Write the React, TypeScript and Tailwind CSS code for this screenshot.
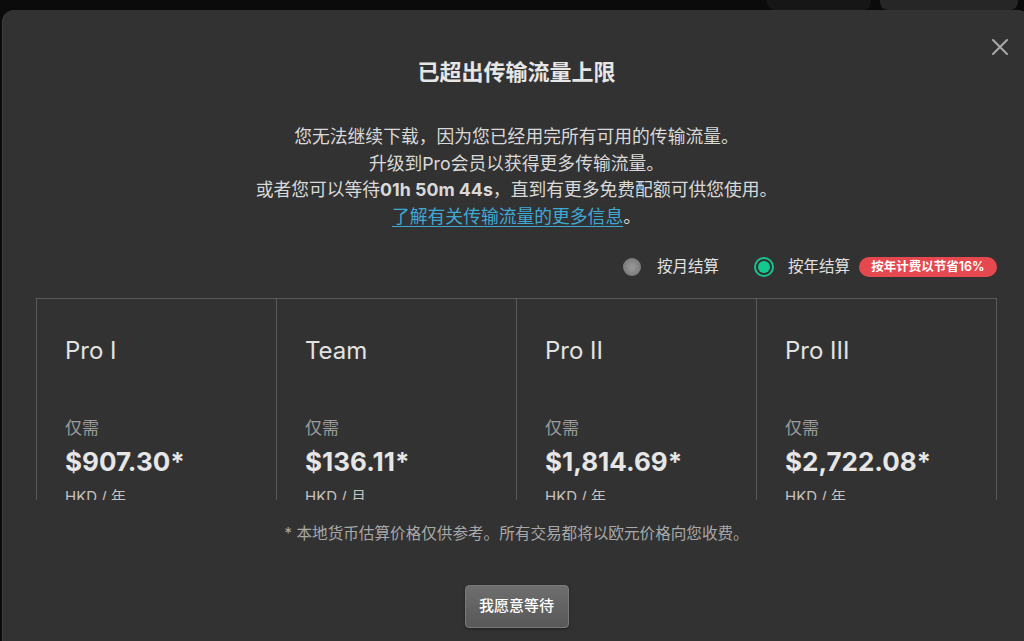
import React from "react";

const plans = [
  { name: "Pro I", price: "$907.30*", unit: "HKD / 年" },
  { name: "Team", price: "$136.11*", unit: "HKD / 月" },
  { name: "Pro II", price: "$1,814.69*", unit: "HKD / 年" },
  { name: "Pro III", price: "$2,722.08*", unit: "HKD / 年" },
];

export default function App() {
  return (
    <div
      className="relative w-[1024px] h-[641px] overflow-hidden bg-[#0b0b0b] pt-[10px] pl-[2px]"
      style={{ fontFamily: 'Inter, "Noto Sans CJK SC", sans-serif' }}
    >
      {/* background app elements peeking above modal */}
      <div className="absolute left-[767px] top-[-20px] w-[104px] h-[30px] rounded-[8px] bg-[#161616]" />
      <div className="absolute left-[880px] top-[-20px] w-[138px] h-[30px] rounded-[8px] bg-[#262626]" />

      <div className="relative w-[1028px] h-[640px] rounded-t-[12px] bg-[#323232] border-l border-[#3c3c3c] px-[33px] pt-[47px] flex flex-col items-center">
        {/* close */}
        <button className="absolute right-[21px] top-[28px] w-[18px] h-[18px] flex items-center justify-center">
          <svg width="18" height="18" viewBox="0 0 18 18" fill="none">
            <path d="M2 2L16 16M16 2L2 16" stroke="#a8a8a8" strokeWidth="2" strokeLinecap="round" />
          </svg>
        </button>

        <h1 className="text-[22px] leading-[30px] font-bold text-[#e6e6e6]">已超出传输流量上限</h1>

        <div className="mt-[37px] text-center text-[17.8px] leading-[26.5px] text-[#d9d9d9]">
          <p>您无法继续下载，因为您已经用完所有可用的传输流量。</p>
          <p>升级到Pro会员以获得更多传输流量。</p>
          <p>
            或者您可以等待<span className="font-bold">01h 50m 44s</span>，直到有更多免费配额可供您使用。
          </p>
          <p>
            <span className="text-[#3fa9d6] underline underline-offset-[3px]">了解有关传输流量的更多信息</span>。
          </p>
        </div>

        <div className="mt-[25px] w-full h-[24px] flex items-center justify-end text-[15.5px] text-[#e0e0e0]">
          <div className="flex items-center">
            <span className="w-[18px] h-[18px] rounded-full bg-[radial-gradient(circle,#9a9a9a_0%,#7c7c7c_70%,#6a6a6a_100%)]" />
            <span className="ml-[16px] leading-[24px]">按月结算</span>
          </div>
          <div className="flex items-center ml-[35px]">
            <span className="w-[20px] h-[20px] rounded-full border-2 border-[#17c48f] flex items-center justify-center">
              <span className="w-[12px] h-[12px] rounded-full bg-[#14c98f]" />
            </span>
            <span className="ml-[14px] leading-[24px]">按年结算</span>
          </div>
          <span className="ml-[9px] w-[138px] h-[20px] rounded-full bg-[#e5484f] text-white text-[12.5px] font-semibold leading-[20px] text-center">
            按年计费以节省16%
          </span>
        </div>

        <div className="mt-[19px] w-full h-[202px] overflow-hidden">
          <div className="grid grid-cols-4 border-t border-l border-[#5a5a5a]">
            {plans.map((p) => (
              <div key={p.name} className="border-r border-[#5a5a5a] h-[260px] pl-[28px] pt-[36px]">
                <div className="text-[24px] leading-[32px] text-[#e2e2e2]">{p.name}</div>
                <div className="mt-[49px] text-[17px] leading-[24px] text-[#9c9c9c]">仅需</div>
                <div className="mt-[6px] text-[26px] leading-[32px] font-bold text-[#e6e6e6]">{p.price}</div>
                <div className="mt-[9px] text-[15px] leading-[20px] text-[#c4c4c4]">{p.unit}</div>
              </div>
            ))}
          </div>
        </div>

        <p className="mt-[23px] text-[15.6px] leading-[22px] text-[#a8a8a8]">
          * 本地货币估算价格仅供参考。所有交易都将以欧元价格向您收费。
        </p>

        <button className="mt-[40px] w-[104px] h-[43px] rounded-[4px] border border-[#7a7a7a] bg-gradient-to-b from-[#6e6e6e] to-[#585858] text-white text-[15px] font-medium shadow-[0_1px_3px_rgba(0,0,0,0.4)]">
          我愿意等待
        </button>
      </div>
    </div>
  );
}
